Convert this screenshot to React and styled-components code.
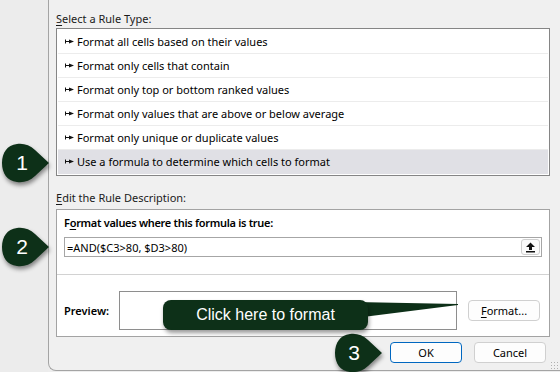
import React from 'react';
import styled, { createGlobalStyle } from 'styled-components';

const GlobalStyle = createGlobalStyle`
  html, body { margin: 0; padding: 0; }
  body {
    background: #ededed;
    font-family: "Noto Sans", "Open Sans", sans-serif;
    font-size: 11px;
    color: #000;
  }
`;

const Screen = styled.div`
  position: relative;
  width: 560px;
  height: 372px;
  overflow: hidden;
  display: flex;
  background: #ededed;
`;

const Gutter = styled.div`
  width: 48px;
  flex: none;
  background: #ececec;
`;

const Dialog = styled.div`
  flex: 1;
  height: 371px;
  box-sizing: border-box;
  background: #f0f0f0;
  border-left: 1px solid #a4a4a4;
  border-bottom: 1px solid #a4a4a4;
  border-bottom-left-radius: 8px;
  padding: 10px 10px 0 7px;
  display: flex;
  flex-direction: column;
  position: relative;
`;

const Label = styled.div`
  height: 17px;
  line-height: 17px;
  margin-top: ${p => p.$gap || 0}px;
  color: #1a1a1a;
`;

const Key = styled.span`
  text-decoration: underline;
  text-underline-offset: 2px;
`;

const ListBox = styled.div`
  margin-top: 1px;
  border: 1px solid #858585;
  background: #fff;
  padding: 1px;
`;

const Row = styled.div`
  height: 24px;
  box-sizing: border-box;
  display: flex;
  align-items: center;
  gap: 3px;
  padding-left: 7px;
  border-bottom: 1px solid ${p => (p.$last ? 'transparent' : '#ececec')};
  background: ${p => (p.$selected ? '#e0e0e5' : '#fff')};
`;

const DescBox = styled.div`
  margin-top: 3px;
  height: 128px;
  box-sizing: border-box;
  border: 1px solid #a3a3a3;
  background: #fff;
  display: flex;
  flex-direction: column;
`;

const TopSection = styled.div`
  padding: 5px 7px 17px 7px;
  border-bottom: 1px solid #d2d2d2;
`;

const Heading = styled.div`
  font-weight: 600;
  letter-spacing: -0.3px;
  height: 16px;
  line-height: 16px;
`;

const FormulaInput = styled.div`
  margin-top: 6px;
  height: 20px;
  box-sizing: border-box;
  border: 1px solid #a6a6a6;
  display: flex;
  align-items: center;
  justify-content: space-between;
  padding: 0 1px 0 2px;
`;

const IconButton = styled.div`
  width: 19px;
  height: 16px;
  box-sizing: border-box;
  border: 1px solid #cfcfcf;
  border-radius: 3px;
  display: flex;
  align-items: center;
  justify-content: center;
  background: #fbfbfb;
`;

const PreviewSection = styled.div`
  flex: 1;
  display: flex;
  align-items: center;
  padding: 16px 9px 6px 7px;
`;

const PreviewLabel = styled.div`
  width: 55px;
  font-weight: 600;
`;

const PreviewBox = styled.div`
  width: 338px;
  height: 39px;
  box-sizing: border-box;
  border: 1px solid #8e8e8e;
  background: #fff;
`;

const Button = styled.div`
  width: 72px;
  height: 21px;
  box-sizing: border-box;
  border: 1px solid ${p => (p.$primary ? '#0067c0' : '#d0d0d0')};
  border-radius: 4px;
  background: #fdfdfd;
  display: flex;
  align-items: center;
  justify-content: center;
  margin-left: ${p => p.$ml || 0}px;
`;

const ButtonRow = styled.div`
  margin-top: 5px;
  display: flex;
  justify-content: flex-end;
  gap: 12px;
  padding-right: 4px;
`;

const Grip = styled.div`
  position: absolute;
  right: 2px;
  bottom: 1px;
  width: 8px;
  height: 8px;
  background-image: radial-gradient(circle, #b0b0b0 0.8px, transparent 1px);
  background-size: 3px 3px;
`;

const Bubble = styled.svg`
  position: absolute;
  left: ${p => p.$x}px;
  top: ${p => p.$y}px;
  overflow: visible;
  filter: drop-shadow(1px 3px 2px rgba(0, 0, 0, 0.45));
`;

const BubbleNum = styled.div`
  position: absolute;
  left: ${p => p.$x}px;
  top: ${p => p.$y}px;
  width: 28px;
  text-align: center;
  color: #fff;
  font-family: "Liberation Sans", Arial, sans-serif;
  font-size: 21px;
  line-height: 24px;
`;

const Callout = styled.div`
  position: absolute;
  left: 163px;
  top: 300px;
  width: 205px;
  height: 30px;
  border-radius: 8px;
  background: #0d3018;
  color: #fff;
  font-family: "Liberation Sans", Arial, sans-serif;
  font-size: 16px;
  display: flex;
  align-items: center;
  justify-content: center;
  box-shadow: 1px 3px 4px rgba(0, 0, 0, 0.4);
`;

const Tail = styled.svg`
  position: absolute;
  left: 355px;
  top: 300px;
  overflow: visible;
`;

const Marker = () => (
  <svg width="9" height="7" viewBox="0 0 9 7">
    <rect x="0" y="1.5" width="1" height="4" fill="#111" />
    <rect x="0" y="3" width="5" height="1" fill="#111" />
    <path d="M4 1.5 L9 3.5 L4 5.5 Z" fill="#111" />
  </svg>
);

const UploadIcon = () => (
  <svg width="11" height="11" viewBox="0 0 11 11">
    <path d="M5.5 0.5 L10 5 L7 5 L7 8 L4 8 L4 5 L1 5 Z" fill="#111" />
    <rect x="1" y="9" width="9" height="1.5" fill="#111" />
  </svg>
);

const rules = [
  'Format all cells based on their values',
  'Format only cells that contain',
  'Format only top or bottom ranked values',
  'Format only values that are above or below average',
  'Format only unique or duplicate values',
  'Use a formula to determine which cells to format',
];

const bubblePath =
  'M48 20 L34 7 C29 2 22 0 16 1 C6 2 1 10 1 20 C1 30 6 38 16 39 C22 40 29 38 34 33 Z';

export default function App() {
  return (
    <>
      <GlobalStyle />
      <Screen>
        <Gutter />
        <Dialog>
          <Label><Key>S</Key>elect a Rule Type:</Label>
          <ListBox>
            {rules.map((r, i) => (
              <Row key={r} $selected={i === 5} $last={i === 5}>
                <Marker />
                <span>{r}</span>
              </Row>
            ))}
          </ListBox>
          <Label $gap={13}><Key>E</Key>dit the Rule Description:</Label>
          <DescBox>
            <TopSection>
              <Heading>F<Key>o</Key>rmat values where this formula is true:</Heading>
              <FormulaInput>
                <span>=AND($C3&gt;80, $D3&gt;80)</span>
                <IconButton><UploadIcon /></IconButton>
              </FormulaInput>
            </TopSection>
            <PreviewSection>
              <PreviewLabel>Preview:</PreviewLabel>
              <PreviewBox />
              <Button $ml={11}><span><Key>F</Key>ormat...</span></Button>
            </PreviewSection>
          </DescBox>
          <ButtonRow>
            <Button $primary>OK</Button>
            <Button>Cancel</Button>
          </ButtonRow>
          <Grip />
        </Dialog>

        <Bubble $x={1} $y={143} width="48" height="40" viewBox="0 0 48 40">
          <path d={bubblePath} fill="#0d3018" />
        </Bubble>
        <BubbleNum $x={8} $y={151}>1</BubbleNum>

        <Bubble $x={1} $y={227} width="48" height="40" viewBox="0 0 48 40">
          <path d={bubblePath} fill="#0d3018" />
        </Bubble>
        <BubbleNum $x={8} $y={235}>2</BubbleNum>

        <Bubble $x={334} $y={333} width="48" height="40" viewBox="0 0 48 40">
          <path d={bubblePath} fill="#0d3018" />
        </Bubble>
        <BubbleNum $x={340} $y={341}>3</BubbleNum>

        <Tail width="104" height="20" viewBox="0 0 104 20">
          <path d="M0 2 L103 4 L103 5 L0 18 Z" fill="#0d3018" />
        </Tail>
        <Callout>Click here to format</Callout>
      </Screen>
    </>
  );
}
